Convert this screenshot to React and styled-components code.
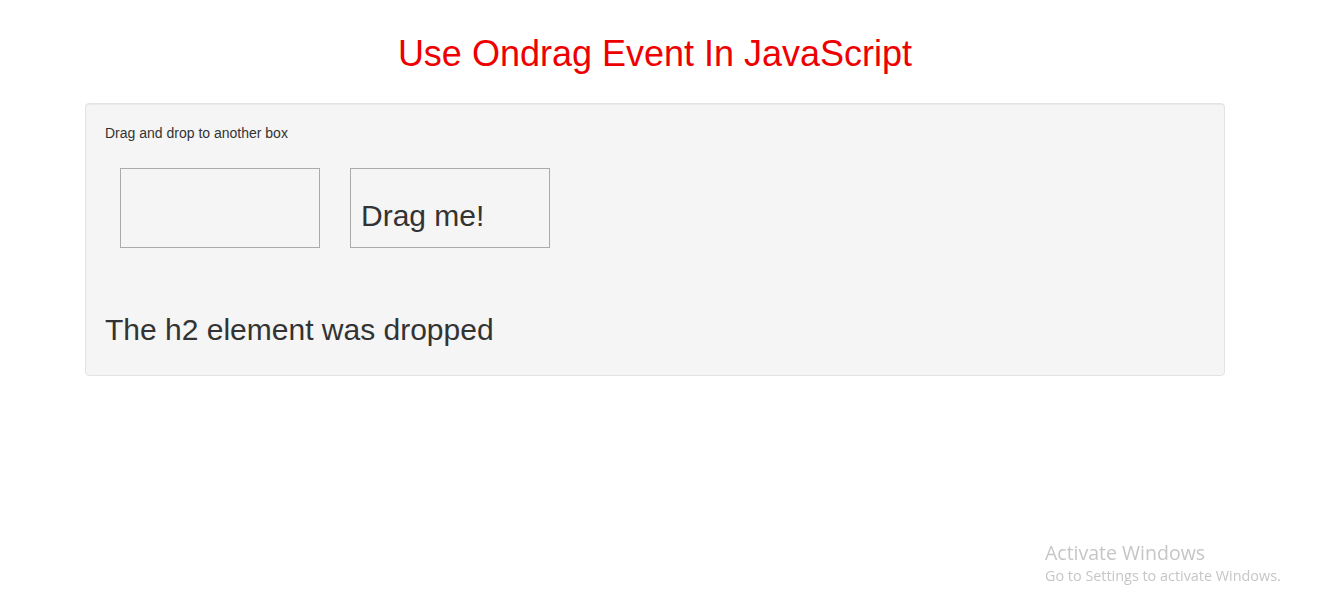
import React from 'react'
import styled, { createGlobalStyle } from "styled-components";

const GlobalStyle = createGlobalStyle`
  * { box-sizing: border-box; }
  body {
    margin: 0;
    background: #fff;
    color: #333;
    font-family: "Liberation Sans", Arial, sans-serif;
    font-size: 14px;
    line-height: 1.42857;
  }
`;

const Page = styled.div`
  width: 1310px;
  padding-top: 14px;
`;

const Container = styled.div`
  width: 1140px;
  margin: 0 auto;
`;

const Title = styled.h1`
  margin: 20px 0 29px;
  font-size: 36px;
  font-weight: 400;
  line-height: 1.1;
  color: #e00;
  text-align: center;
`;

const Well = styled.div`
  background: #f5f5f5;
  border: 1px solid #e3e3e3;
  border-radius: 4px;
  padding: 19px;
  box-shadow: inset 0 1px 1px rgba(0, 0, 0, 0.05);
`;

const Hint = styled.p`
  margin: 1px 0 9px;
`;

const Targets = styled.div`
  display: flex;
`;

const DropTarget = styled.div`
  width: 200px;
  height: 80px;
  margin: 15px;
  padding: 10px;
  border: 1px solid #aaa;
`;

const Heading = styled.h2`
  margin: ${(props) => props.$top || "20px"} 0 10px;
  font-size: 30px;
  font-weight: 400;
  line-height: 1.1;
  white-space: nowrap;
`;

const Watermark = styled.div`
  position: fixed;
  left: 1045px;
  top: 541px;
  font-family: "Open Sans", "Noto Sans", sans-serif;
  color: #c6c6c6;
  line-height: 1.2;
`;

const WatermarkTitle = styled.div`
  font-size: 19.5px;
`;

const WatermarkNote = styled.div`
  font-size: 14.4px;
  margin-top: 3px;
`;

const App = () => {
  return (
    <Page>
      <GlobalStyle />
      <Container>
        <Title>Use Ondrag Event In JavaScript</Title>
        <Well>
          <Hint>Drag and drop to another box</Hint>
          <Targets>
            <DropTarget />
            <DropTarget>
              <Heading draggable="true">Drag me!</Heading>
            </DropTarget>
          </Targets>
          <Heading $top="50px">The h2 element was dropped</Heading>
        </Well>
      </Container>
      <Watermark>
        <WatermarkTitle>Activate Windows</WatermarkTitle>
        <WatermarkNote>Go to Settings to activate Windows.</WatermarkNote>
      </Watermark>
    </Page>
  )
}

export default App;
